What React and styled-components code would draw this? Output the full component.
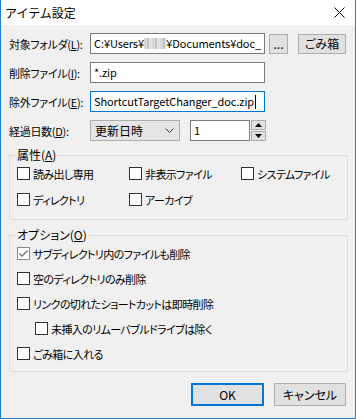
import styled, { createGlobalStyle } from 'styled-components'

const Global = createGlobalStyle`
    html, body {
        margin: 0;
        padding: 0;
        background: #f0f0f0;
    }
    body {
        font-family: "Noto Sans CJK JP", sans-serif;
        font-size: 11px;
        font-feature-settings: "palt" 1;
        color: #000;
    }
    * {
        box-sizing: border-box;
    }
`

const Window = styled.div`
    width: 356px;
    height: 419px;
    display: flex;
    flex-direction: column;
    background: #f0f0f0;
    border: 1px solid #1a80d8;
    border-top: none;
`

const TitleBar = styled.div`
    height: 25px;
    flex: none;
    background: #fff;
    display: flex;
    align-items: center;
    justify-content: space-between;
    padding: 0 10px 0 4px;
    font-size: 12px;
    font-feature-settings: normal;
`

const Body = styled.div`
    display: flex;
    flex-direction: column;
    padding: 8px 7px 0 8px;
`

const Fields = styled.div`
    display: flex;
    flex-direction: column;
    gap: 8px;
`

const Row = styled.div`
    display: flex;
    align-items: center;
    height: 21px;
`

const Label = styled.div`
    width: 81px;
    flex: none;
    white-space: nowrap;
    letter-spacing: -0.3px;
`

const Key = styled.u`
    text-decoration: underline;
    text-underline-offset: 1px;
`

const TextBox = styled.div`
    width: ${p => p.$w || 175}px;
    height: 21px;
    flex: none;
    display: flex;
    align-items: center;
    padding: 0 3px;
    background: #fff;
    border: 1px solid ${p => (p.$focus ? '#0078d7' : '#7a7a7a')};
    white-space: nowrap;
    overflow: hidden;
    line-height: 1;
    font-size: 11px;
    letter-spacing: -0.1px;
`

const Blur = styled.span`
    display: inline-block;
    width: 30px;
    height: 11px;
    background:
        repeating-linear-gradient(90deg, #d8d8d8 0 3px, #c4c4c4 3px 5px, #e4e4e4 5px 8px),
        #d0d0d0;
`

const Caret = styled.span`
    display: inline-block;
    width: 1px;
    height: 14px;
    background: #000;
    margin-left: 1px;
`

const Button = styled.div`
    width: ${p => p.$w}px;
    height: ${p => p.$h || 20}px;
    flex: none;
    display: flex;
    align-items: center;
    justify-content: center;
    background: #e1e1e1;
    border: ${p => (p.$default ? '2px solid #0078d7' : '1px solid #adadad')};
    margin-left: ${p => p.$ml || 0}px;
    font-size: 12px;
`

const Select = styled.div`
    width: 90px;
    height: 21px;
    flex: none;
    display: flex;
    align-items: center;
    justify-content: space-between;
    padding: 0 5px 0 4px;
    background: #e5e5e5;
    border: 1px solid #adadad;
    font-size: 12px;
`

const Spin = styled.div`
    display: flex;
    flex-direction: column;
    gap: 1px;
    margin-left: 1px;
`

const SpinButton = styled.div`
    width: 15px;
    height: 10px;
    display: flex;
    align-items: center;
    justify-content: center;
    background: #e1e1e1;
    border: 1px solid #adadad;
`

const Group = styled.fieldset`
    margin: ${p => p.$mt}px 0 0;
    padding: 0 6px ${p => p.$pb}px 6px;
    border: 1px solid #dcdcdc;
    min-width: 0;
`

const Legend = styled.legend`
    padding: 0 1px;
    line-height: 16px;
    height: 16px;
    font-size: 12px;
`

const AttrGrid = styled.div`
    display: grid;
    grid-template-columns: repeat(3, 112px);
    row-gap: 5px;
    padding-left: 1px;
`

const OptionList = styled.div`
    display: flex;
    flex-direction: column;
    gap: 4px;
    padding-left: 1px;
`

const Check = styled.div`
    display: flex;
    align-items: center;
    height: 21px;
    padding-left: ${p => (p.$indent ? 18 : 0)}px;
    white-space: nowrap;
    letter-spacing: -0.6px;
`

const Box = styled.span`
    width: 13px;
    height: 13px;
    flex: none;
    display: flex;
    align-items: center;
    justify-content: center;
    background: #fff;
    border: 1px solid ${p => (p.$checked ? '#8a8a8a' : '#333')};
    margin-right: 3px;
`

const Footer = styled.div`
    display: flex;
    justify-content: flex-end;
    gap: 10px;
    margin-top: 11px;
    padding-right: 2px;
`

const CheckBox = ({ checked, indent, children }) => (
    <Check $indent={indent}>
        <Box $checked={checked}>
            {checked && (
                <svg width="11" height="11" viewBox="0 0 11 11">
                    <path d="M1.5 5.5 L4 8 L9.5 2.5" fill="none" stroke="#777" strokeWidth="1.4" />
                </svg>
            )}
        </Box>
        {children}
    </Check>
)

const App = () => {
    return (
        <>
            <Global />
            <Window>
                <TitleBar>
                    <span>アイテム設定</span>
                    <svg width="11" height="11" viewBox="0 0 11 11">
                        <path d="M0.5 0.5 L10.5 10.5 M10.5 0.5 L0.5 10.5" stroke="#000" strokeWidth="1" />
                    </svg>
                </TitleBar>

                <Body>
                    <Fields>
                        <Row>
                            <Label>対象フォルダ(<Key>L</Key>):</Label>
                            <TextBox>C:¥Users¥<Blur />¥Documents¥doc_</TextBox>
                            <Button $w={19} $ml={4}>...</Button>
                            <Button $w={48} $ml={10}>ごみ箱</Button>
                        </Row>
                        <Row>
                            <Label>削除ファイル(<Key>I</Key>):</Label>
                            <TextBox>*.zip</TextBox>
                        </Row>
                        <Row>
                            <Label>除外ファイル(<Key>E</Key>):</Label>
                            <TextBox $focus>ShortcutTargetChanger_doc.zip<Caret /></TextBox>
                        </Row>
                        <Row>
                            <Label>経過日数(<Key>D</Key>):</Label>
                            <Select>
                                <span>更新日時</span>
                                <svg width="9" height="6" viewBox="0 0 9 6">
                                    <path d="M0.5 0.5 L4.5 4.5 L8.5 0.5" fill="none" stroke="#333" strokeWidth="1" />
                                </svg>
                            </Select>
                            <TextBox $w={60} style={{ marginLeft: 10 }}>1</TextBox>
                            <Spin>
                                <SpinButton>
                                    <svg width="7" height="4" viewBox="0 0 7 4"><path d="M0 4 L3.5 0 L7 4 Z" fill="#000" /></svg>
                                </SpinButton>
                                <SpinButton>
                                    <svg width="7" height="4" viewBox="0 0 7 4"><path d="M0 0 L3.5 4 L7 0 Z" fill="#000" /></svg>
                                </SpinButton>
                            </Spin>
                        </Row>
                    </Fields>

                    <Group $mt={6} $pb={9}>
                        <Legend>属性(<Key>A</Key>)</Legend>
                        <AttrGrid>
                            <CheckBox>読み出し専用</CheckBox>
                            <CheckBox>非表示ファイル</CheckBox>
                            <CheckBox>システムファイル</CheckBox>
                            <CheckBox>ディレクトリ</CheckBox>
                            <CheckBox>アーカイブ</CheckBox>
                        </AttrGrid>
                    </Group>

                    <Group $mt={7} $pb={7}>
                        <Legend>オプション(<Key>O</Key>)</Legend>
                        <OptionList>
                            <CheckBox checked>サブディレクトリ内のファイルも削除</CheckBox>
                            <CheckBox>空のディレクトリのみ削除</CheckBox>
                            <CheckBox>リンクの切れたショートカットは即時削除</CheckBox>
                            <CheckBox indent>未挿入のリムーバブルドライブは除く</CheckBox>
                            <CheckBox>ごみ箱に入れる</CheckBox>
                        </OptionList>
                    </Group>

                    <Footer>
                        <Button $w={73} $h={23} $default>OK</Button>
                        <Button $w={72} $h={23}>キャンセル</Button>
                    </Footer>
                </Body>
            </Window>
        </>
    )
}

export default App
